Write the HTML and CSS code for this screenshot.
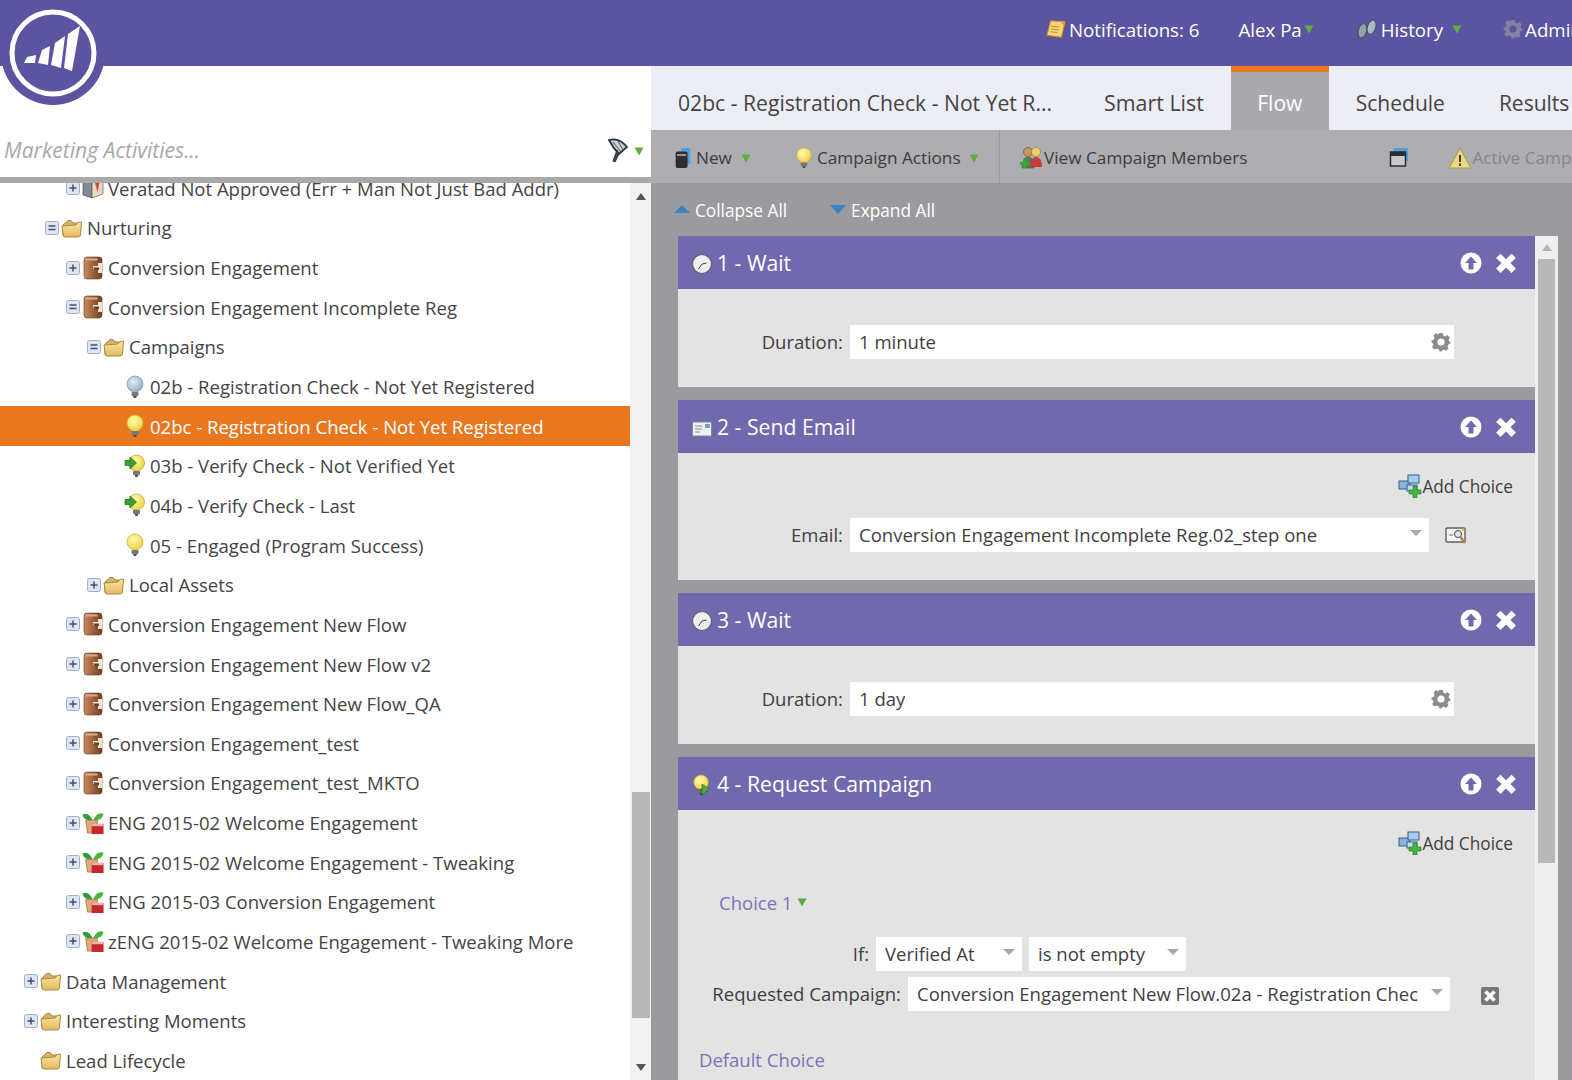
FILE: index.html
```html
<!DOCTYPE html>
<html lang="en">
<head>
<meta charset="utf-8">
<title>Marketing Activities</title>
<link rel="stylesheet" href="styles.css">
</head>
<body>
<svg class="sprite" aria-hidden="true">
  <defs>
    <radialGradient id="gy" cx="40%" cy="35%" r="70%"><stop offset="0" stop-color="#fffbb0"/><stop offset="1" stop-color="#ecd23a"/></radialGradient>
    <radialGradient id="gb" cx="40%" cy="35%" r="70%"><stop offset="0" stop-color="#e4eef8"/><stop offset="1" stop-color="#8fa9c6"/></radialGradient>
    <linearGradient id="gf" x1="0" y1="0" x2="0" y2="1"><stop offset="0" stop-color="#fbe7a6"/><stop offset="1" stop-color="#e3b95c"/></linearGradient>
    <linearGradient id="gp" x1="0" y1="0" x2="1" y2="0"><stop offset="0" stop-color="#c98a5e"/><stop offset="1" stop-color="#6f3d20"/></linearGradient>
    <symbol id="folder" viewBox="0 0 22 20"><path d="M2 7 L2 17 Q2 18.500 4 18.500 L17 18.500 Q19 18.500 19 17 L19 5 L12 5 L10 2.500 L7 2.500 Z" fill="#d9b163" stroke="#a58443"/><path d="M1 8 L15 7 L17 4.500 L20.500 4 L19.500 17 Q19 19 17 19 L4 19 Q2.500 19 2.200 17 Z" fill="url(#gf)" stroke="#a98a48"/></symbol>
    <symbol id="box" viewBox="0 0 22 24"><rect x="2" y="1" width="18" height="22" rx="3" fill="url(#gp)" stroke="#5f3a22" stroke-width=".6"/><rect x="3.500" y="2.500" width="12" height="2" fill="#d9ab88"/><path d="M11 10 L16 10 L16 7 L20 7 L20 17 L16 17 L16 13 L11 13 Z" fill="#f1e3d4"/><path d="M11 11.500 L17 11.500 L17 14 L13 14 Z" fill="#6f3d20"/></symbol>
    <symbol id="bulb" viewBox="0 0 20 24"><circle cx="10" cy="9" r="8" fill="url(#gy)" stroke="#c9ad35" stroke-width=".7"/><path d="M7 15 H13 V17 H7 Z" fill="#e7cf55"/><rect x="6.500" y="17" width="7" height="4" rx="1" fill="#77787c"/><path d="M8 21 H12 L11 23 H9 Z" fill="#4d4e52"/></symbol>
    <symbol id="bulbblue" viewBox="0 0 20 24"><circle cx="10" cy="9" r="8" fill="url(#gb)" stroke="#7e93ab" stroke-width=".7"/><path d="M7 15 H13 V17 H7 Z" fill="#9fb4c9"/><rect x="6.500" y="17" width="7" height="4" rx="1" fill="#77787c"/><path d="M8 21 H12 L11 23 H9 Z" fill="#4d4e52"/></symbol>
    <symbol id="bulbgo" viewBox="0 0 22 24"><circle cx="12.500" cy="9" r="8" fill="url(#gy)" stroke="#b9a030" stroke-width=".7"/><rect x="9" y="17" width="7" height="4" rx="1" fill="#77787c"/><path d="M10.500 21 H14.500 L13.500 23 H11.500 Z" fill="#4d4e52"/><path d="M1 6.500 H6 V3 L12.500 9 L6 15 V11.500 H1 Z" fill="#3aa12e" stroke="#1f6d1b" stroke-width=".7"/></symbol>
    <symbol id="bulbplay" viewBox="0 0 22 24"><circle cx="10" cy="9" r="8" fill="url(#gy)" stroke="#b9a030" stroke-width=".7"/><rect x="6.500" y="16" width="7" height="5" rx="1" fill="#6a6b70"/><path d="M8 21 H12 L11 23 H9 Z" fill="#3d3e42"/><path d="M11 11 L19 16.500 L11 23 Z" fill="#4cae34" stroke="#1f6d1b" stroke-width=".7"/></symbol>
    <symbol id="plant" viewBox="0 0 24 24"><path d="M12 10 Q7 -1 .5 3 Q2 10 12 9 Z" fill="#2f9f35"/><path d="M12 10 Q16 -1 23.500 2 Q22 10 12 9 Z" fill="#45b53c"/><path d="M4 9 H17 L15.500 23 H6 Z" fill="#dcab7c" stroke="#8b6138" stroke-width=".7"/><rect x="10.500" y="13" width="13" height="11" fill="#c7282d"/><rect x="10.500" y="13" width="13" height="2.500" fill="#f1b0ae"/></symbol>
    <symbol id="vera" viewBox="0 0 22 22"><path d="M1 3 L10 6 L10 21 L1 18 Z" fill="#7f8b99" stroke="#4e565f" stroke-width=".7"/><path d="M10 6 L21 2 L21 17 L10 21 Z" fill="#e6d8c6" stroke="#6e5a4a" stroke-width=".7"/><path d="M13 5.500 L18 3.500 L15.500 15 Z" fill="#d0483e"/></symbol>
    <symbol id="plus" viewBox="0 0 14 14"><rect x=".5" y=".5" width="13" height="13" rx="2" fill="#dfe6f2" stroke="#9fb0cb"/><path d="M3.500 7 H10.500 M7 3.500 V10.500" stroke="#3e5170" stroke-width="1.500"/></symbol>
    <symbol id="minus" viewBox="0 0 14 14"><rect x=".5" y=".5" width="13" height="13" rx="2" fill="#dfe6f2" stroke="#9fb0cb"/><path d="M3.500 5 H10.500 M3.500 8.500 H10.500" stroke="#3e5170" stroke-width="1.300"/></symbol>
    <symbol id="caret" viewBox="0 0 10 10"><path d="M.5 1.500 H9.500 L5 9.500 Z" fill="#5fae3a"/></symbol>
    <symbol id="clock" viewBox="0 0 22 22"><circle cx="11" cy="11" r="9.500" fill="#eeeef0" stroke="#62626a" stroke-width="1.200"/><path d="M11 11 L7.500 16 M11 11 L15.500 10" stroke="#44444c" stroke-width="1"/></symbol>
    <symbol id="mail" viewBox="0 0 22 22"><rect x="1.500" y="5" width="19" height="14" fill="#eef0f2" stroke="#868a90"/><path d="M4 9 H11 M4 12 H11 M4 15 H9" stroke="#8a8f96" stroke-width="1.200"/><rect x="14" y="7" width="5" height="4" fill="#7aa0c6"/></symbol>
    <symbol id="upc" viewBox="0 0 24 24"><circle cx="12" cy="12" r="10.500" fill="#fff"/><path d="M12 5.500 L18 12 L14.500 12 L14.500 18.500 L9.500 18.500 L9.500 12 L6 12 Z" fill="#7069ae"/></symbol>
    <symbol id="x" viewBox="0 0 20 20"><path d="M5 1.500 L10 6.500 L15 1.500 L19 5.500 L14 10 L19 15 L15 19 L10 14 L5 19 L1 15 L6 10 L1 5.500 Z" fill="#fff"/></symbol>
    <symbol id="gear" viewBox="0 0 20 20"><path d="M8.300 1 H11.700 L12.200 3.500 L14.300 4.400 L16.500 3 L18.900 5.500 L17.500 7.600 L18.400 9.700 L19.500 10 V11.500 L17.400 12.500 L16.500 14.500 L17.500 16.500 L15 19 L13 17.500 L11 18.500 L10.500 19.500 H8.500 L8 17.500 L5.700 16.500 L3.500 17.500 L1 15 L2.500 13 L1.600 11 L.5 10.500 V8.500 L2.500 8 L3.500 6 L2.500 3.500 L5 1 L7 2.500 Z" fill="currentColor"/><circle cx="10" cy="10" r="3.600" fill="var(--hole)"/></symbol>
    <symbol id="addch" viewBox="0 0 24 24"><rect x="1" y="7" width="11" height="8" fill="#8ab4dc" stroke="#32608c"/><rect x="10" y="1" width="11" height="8" fill="#a6cdf0" stroke="#32608c"/><rect x="9" y="11" width="10" height="6" fill="#c9ddef" stroke="#32608c"/><path d="M15 12 H19 V16 H23 V20 H19 V24 H15 V20 H11 V16 H15 Z" fill="#44b644" stroke="#1f6f1f" stroke-width=".6"/></symbol>
    <symbol id="find" viewBox="0 0 24 20"><rect x="1" y="2" width="19" height="14" rx="1" fill="#f4f4f4" stroke="#5e6066" stroke-width="1.400"/><path d="M4 9 H8" stroke="#6e7076"/><circle cx="13" cy="8" r="3.500" fill="#dbe9f4" stroke="#44474c"/><path d="M15.500 11 L20 17" stroke="#b78332" stroke-width="2.400"/><circle cx="18" cy="4" r="1.500" fill="#e3c63d"/></symbol>
    <symbol id="del" viewBox="0 0 20 20"><rect x="1" y="1" width="18" height="18" rx="2" fill="#77777b"/><path d="M5.500 5.500 L14.500 14.500 M14.500 5.500 L5.500 14.500" stroke="#f4f4f4" stroke-width="3.800"/></symbol>
    <symbol id="note" viewBox="0 0 22 22"><path d="M5 2 L21 3 L17 20 L1 18 Z" fill="#f4d774" stroke="#c9882a" stroke-width="1.200"/><path d="M6 8 L15 9 M5.500 11 L14.500 12 M5 14 L13 15" stroke="#b28a3a"/><path d="M15 2 L21 3 L20 8 Z" fill="#e69b2a"/></symbol>
    <symbol id="steps" viewBox="0 0 22 22"><ellipse cx="6" cy="13" rx="4.500" ry="8" transform="rotate(15 6 13)" fill="#8fa3a8" stroke="#3c4d58"/><ellipse cx="16" cy="9" rx="4.500" ry="8" transform="rotate(18 16 9)" fill="#a7bcc0" stroke="#3c4d58"/></symbol>
    <symbol id="newb" viewBox="0 0 20 24"><rect x="8" y="1" width="10" height="18" rx="2" fill="#4f9fe0"/><rect x="2" y="5" width="13" height="18" rx="2" fill="#2d2d30"/><rect x="3.500" y="8" width="10" height="1.500" fill="#c9c9cc"/></symbol>
    <symbol id="people" viewBox="0 0 24 24"><circle cx="9" cy="6" r="4.500" fill="#c79a5c" stroke="#6f5020" stroke-width=".6"/><path d="M3 22 Q3 11 9 11 Q15 11 15 22 Z" fill="#4f7f5c" stroke="#3f5f40" stroke-width=".6"/><circle cx="17" cy="6" r="4.500" fill="#ecd06a" stroke="#8f7520" stroke-width=".6"/><path d="M11 21 Q11 11 17 11 Q23 11 23 21 Z" fill="#c93a38"/><path d="M4 13 H7 V16 H10 V19 H7 V22 H4 V19 H1 V16 H4 Z" fill="#3aa92e"/></symbol>
    <symbol id="cal" viewBox="0 0 20 20"><rect x="5" y="1" width="14" height="13" fill="#4f9fe0"/><rect x="1.500" y="5" width="15" height="14" fill="#c9c9cc" stroke="#2d2d30" stroke-width="1.500"/><rect x="1.500" y="5" width="15" height="4" fill="#2d2d30"/></symbol>
    <symbol id="warn" viewBox="0 0 24 22"><path d="M12 1.500 L23 21 H1 Z" fill="#e9d98a" stroke="#b7a04a" stroke-width="1.200"/><path d="M12 8 V15 M12 16.500 V19" stroke="#4a3f1c" stroke-width="2"/></symbol>
    <symbol id="funnel" viewBox="0 0 22 26"><path d="M2 2 Q12 -1 20 9 L12 16 Q6 10 2 2 Z" fill="#cbd1d6" stroke="#27323a" stroke-width="1.800"/><path d="M6 4 L14 14 M11 3 L16 12" stroke="#46525c"/><path d="M12 16 L8 24 L6 23 L10 12 Z" fill="#3d4952" stroke="#27323a"/></symbol>
  </defs>
</svg>

<header class="topbar">
  <nav class="topnav">
    <a class="tn tn-notes"><svg class="ic20"><use href="#note"/></svg><span>Notifications: 6</span></a>
    <a class="tn tn-user"><span>Alex Pa</span><svg class="caret"><use href="#caret"/></svg></a>
    <a class="tn tn-hist"><svg class="ic20"><use href="#steps"/></svg><span>History</span><svg class="caret caret-wide"><use href="#caret"/></svg></a>
    <a class="tn tn-admin"><svg class="ic20 topgear"><use href="#gear"/></svg><span>Admin</span></a>
  </nav>
</header>

<div class="logo">
  <svg viewBox="0 0 106 106" width="106" height="106">
    <circle cx="53" cy="53" r="52" fill="#5b54a0"/>
    <circle cx="53" cy="53" r="41" fill="none" stroke="#fff" stroke-width="5"/>
    <path d="M27 57 L36 55 L35 63 L24 63 Z M42 50 L50 46 L48 65 L38 63 Z M55 43 L65 36 L61 68 L51 65 Z M68 34 L80 26 L72 71 L64 68 Z" fill="#fff"/>
  </svg>
</div>

<div class="app">
  <aside class="left">
    <div class="searchbar">
      <div class="search-text">Marketing Activities...</div>
      <svg class="funnel"><use href="#funnel"/></svg>
      <svg class="caret"><use href="#caret"/></svg>
    </div>
    <div class="treewrap">
      <ul class="tree">
        <li class="row l2"><svg class="tog"><use href="#plus"/></svg><svg class="ti"><use href="#vera"/></svg><span>Veratad Not Approved (Err + Man Not Just Bad Addr)</span></li>
        <li class="row l1"><svg class="tog"><use href="#minus"/></svg><svg class="ti"><use href="#folder"/></svg><span>Nurturing</span></li>
        <li class="row l2"><svg class="tog"><use href="#plus"/></svg><svg class="ti"><use href="#box"/></svg><span>Conversion Engagement</span></li>
        <li class="row l2"><svg class="tog"><use href="#minus"/></svg><svg class="ti"><use href="#box"/></svg><span>Conversion Engagement Incomplete Reg</span></li>
        <li class="row l3"><svg class="tog"><use href="#minus"/></svg><svg class="ti"><use href="#folder"/></svg><span>Campaigns</span></li>
        <li class="row l4"><i class="tog"></i><svg class="ti"><use href="#bulbblue"/></svg><span>02b - Registration Check - Not Yet Registered</span></li>
        <li class="row l4 sel"><i class="tog"></i><svg class="ti"><use href="#bulb"/></svg><span>02bc - Registration Check - Not Yet Registered</span></li>
        <li class="row l4"><i class="tog"></i><svg class="ti"><use href="#bulbgo"/></svg><span>03b - Verify Check - Not Verified Yet</span></li>
        <li class="row l4"><i class="tog"></i><svg class="ti"><use href="#bulbgo"/></svg><span>04b - Verify Check - Last</span></li>
        <li class="row l4"><i class="tog"></i><svg class="ti"><use href="#bulb"/></svg><span>05 - Engaged (Program Success)</span></li>
        <li class="row l3"><svg class="tog"><use href="#plus"/></svg><svg class="ti"><use href="#folder"/></svg><span>Local Assets</span></li>
        <li class="row l2"><svg class="tog"><use href="#plus"/></svg><svg class="ti"><use href="#box"/></svg><span>Conversion Engagement New Flow</span></li>
        <li class="row l2"><svg class="tog"><use href="#plus"/></svg><svg class="ti"><use href="#box"/></svg><span>Conversion Engagement New Flow v2</span></li>
        <li class="row l2"><svg class="tog"><use href="#plus"/></svg><svg class="ti"><use href="#box"/></svg><span>Conversion Engagement New Flow_QA</span></li>
        <li class="row l2"><svg class="tog"><use href="#plus"/></svg><svg class="ti"><use href="#box"/></svg><span>Conversion Engagement_test</span></li>
        <li class="row l2"><svg class="tog"><use href="#plus"/></svg><svg class="ti"><use href="#box"/></svg><span>Conversion Engagement_test_MKTO</span></li>
        <li class="row l2"><svg class="tog"><use href="#plus"/></svg><svg class="ti"><use href="#plant"/></svg><span>ENG 2015-02 Welcome Engagement</span></li>
        <li class="row l2"><svg class="tog"><use href="#plus"/></svg><svg class="ti"><use href="#plant"/></svg><span>ENG 2015-02 Welcome Engagement - Tweaking</span></li>
        <li class="row l2"><svg class="tog"><use href="#plus"/></svg><svg class="ti"><use href="#plant"/></svg><span>ENG 2015-03 Conversion Engagement</span></li>
        <li class="row l2"><svg class="tog"><use href="#plus"/></svg><svg class="ti"><use href="#plant"/></svg><span>zENG 2015-02 Welcome Engagement - Tweaking More</span></li>
        <li class="row l0"><svg class="tog"><use href="#plus"/></svg><svg class="ti"><use href="#folder"/></svg><span>Data Management</span></li>
        <li class="row l0"><svg class="tog"><use href="#plus"/></svg><svg class="ti"><use href="#folder"/></svg><span>Interesting Moments</span></li>
        <li class="row l0"><i class="tog"></i><svg class="ti"><use href="#folder"/></svg><span>Lead Lifecycle</span></li>
      </ul>
      <div class="vscroll">
        <div class="arrow arrow-up"></div>
        <div class="thumb"></div>
        <div class="arrow arrow-down"></div>
      </div>
    </div>
  </aside>

  <main class="right">
    <div class="tabs">
      <div class="tab tab-title">02bc - Registration Check - Not Yet R...</div>
      <div class="tab tab-smart">Smart List</div>
      <div class="tab active">Flow</div>
      <div class="tab">Schedule</div>
      <div class="tab">Results</div>
    </div>
    <div class="toolbar">
      <div class="tgroup">
        <a class="tb tb-new"><svg class="ic20"><use href="#newb"/></svg><span>New</span><svg class="caret"><use href="#caret"/></svg></a>
        <a class="tb tb-actions"><svg class="ic20"><use href="#bulb"/></svg><span>Campaign Actions</span><svg class="caret"><use href="#caret"/></svg></a>
      </div>
      <a class="tb tb-members"><svg class="ic24"><use href="#people"/></svg><span>View Campaign Members</span></a>
      <svg class="ic20 tb-cal"><use href="#cal"/></svg>
      <a class="tb tb-active"><svg class="ic24"><use href="#warn"/></svg><span>Active Campaign</span></a>
    </div>
    <div class="expander">
      <a class="ex"><i class="tri tri-up"></i>Collapse All</a>
      <a class="ex"><i class="tri tri-down"></i>Expand All</a>
    </div>
    <div class="flowarea">
      <div class="cards">
        <section class="card">
          <h2 class="card-h"><svg class="ci"><use href="#clock"/></svg><span>1 - Wait</span><svg class="up"><use href="#upc"/></svg><svg class="xx"><use href="#x"/></svg></h2>
          <div class="card-b">
            <div class="frow"><label class="lab">Duration:</label><div class="field f-wide"><span>1 minute</span><svg class="fgear"><use href="#gear"/></svg></div></div>
          </div>
        </section>
        <section class="card">
          <h2 class="card-h"><svg class="ci"><use href="#mail"/></svg><span>2 - Send Email</span><svg class="up"><use href="#upc"/></svg><svg class="xx"><use href="#x"/></svg></h2>
          <div class="card-b card-b-add">
            <a class="addc"><svg class="ic24"><use href="#addch"/></svg>Add Choice</a>
            <div class="frow"><label class="lab">Email:</label><div class="field f-email"><span>Conversion Engagement Incomplete Reg.02_step one</span><i class="dd"></i></div><svg class="findi"><use href="#find"/></svg></div>
          </div>
        </section>
        <section class="card">
          <h2 class="card-h"><svg class="ci"><use href="#clock"/></svg><span>3 - Wait</span><svg class="up"><use href="#upc"/></svg><svg class="xx"><use href="#x"/></svg></h2>
          <div class="card-b">
            <div class="frow"><label class="lab">Duration:</label><div class="field f-wide"><span>1 day</span><svg class="fgear"><use href="#gear"/></svg></div></div>
          </div>
        </section>
        <section class="card">
          <h2 class="card-h"><svg class="ci"><use href="#bulbplay"/></svg><span>4 - Request Campaign</span><svg class="up"><use href="#upc"/></svg><svg class="xx"><use href="#x"/></svg></h2>
          <div class="card-b card-b-add card-last">
            <a class="addc"><svg class="ic24"><use href="#addch"/></svg>Add Choice</a>
            <div class="choice">Choice 1<svg class="caret"><use href="#caret"/></svg></div>
            <div class="frow frow-if"><label class="lab lab-if">If:</label><div class="field f-s1"><span>Verified At</span><i class="dd"></i></div><div class="field f-s2"><span>is not empty</span><i class="dd"></i></div></div>
            <div class="frow frow-req"><label class="lab lab-req">Requested Campaign:</label><div class="field f-req"><span>Conversion Engagement New Flow.02a - Registration Chec</span><i class="dd"></i></div><svg class="deli"><use href="#del"/></svg></div>
            <div class="defch">Default Choice</div>
          </div>
        </section>
      </div>
      <div class="fscroll">
        <div class="fs-arrow"></div>
        <div class="fs-thumb"></div>
      </div>
    </div>
  </main>
</div>
</body>
</html>
```
FILE: styles.css
```css
* { box-sizing: border-box; }
html, body { margin: 0; padding: 0; height: 1080px; overflow: hidden; }
body { position: relative; width: 1572px; background: #fff; font-family: "Open Sans", "Noto Sans", sans-serif; color: #444; }
.sprite { display: block; width: 0; height: 0; }
ul { list-style: none; margin: 0; padding: 0; }

.topbar { height: 66px; background: #5b54a0; overflow: hidden; }
.topnav { display: flex; align-items: center; height: 58px; margin-left: 1046px; width: 600px; color: #fff; font-size: 18.7px; }
.tn { display: flex; align-items: center; flex: none; }
.ic20 { width: 20px; height: 22px; flex: none; }
.ic24 { width: 24px; height: 24px; flex: none; }
.caret { width: 10px; height: 10px; flex: none; }
.tn-notes span { margin-left: 3px; }
.tn-user { margin-left: 39px; }
.tn-user .caret { margin-left: 2px; }
.tn-hist { margin-left: 43px; }
.tn-hist span { margin-left: 4px; }
.caret-wide { margin-left: 9px; }
.tn-admin { margin-left: 41px; }
.tn-admin span { margin-left: 2px; }
.topgear { color: #85819c; --hole: #5b54a0; }

.logo { position: absolute; left: 0; top: 0; width: 106px; height: 106px; overflow: hidden; }
.logo svg { display: block; }

.app { display: flex; height: 1014px; }
.left { width: 651px; flex: none; display: flex; flex-direction: column; }
.searchbar { height: 117px; flex: none; display: flex; align-items: flex-end; padding: 0 7px 10px 4px; border-bottom: 6px solid #a9a9a9; }
.search-text { flex: 1; font-style: italic; color: #a8a8a8; font-size: 21.1px; line-height: 34px; }
.funnel { width: 22px; height: 26px; margin: 0 5px 3px 0; }
.searchbar .caret { margin-bottom: 11px; }
.treewrap { flex: 1; display: flex; overflow: hidden; min-height: 0; }
.tree { flex: 1; margin-top: -14.5px; font-size: 18.55px; color: #444; }
.row { display: flex; align-items: center; height: 39.65px; white-space: nowrap; }
.row > span { margin-left: 4px; }
.l0 { padding-left: 24px; }
.l1 { padding-left: 45px; }
.l2 { padding-left: 66px; }
.l3 { padding-left: 87px; }
.l4 { padding-left: 108px; }
.tog { width: 14px; height: 14px; margin-right: 2px; flex: none; display: block; }
.ti { width: 22px; height: 24px; flex: none; }
.sel { background: #e8771f; color: #fff; }
.vscroll { width: 21px; flex: none; background: #f2f2f2; display: flex; flex-direction: column; align-items: center; }
.arrow { width: 0; height: 0; flex: none; border-left: 5px solid transparent; border-right: 5px solid transparent; }
.arrow-up { border-bottom: 7px solid #555; margin-top: 10px; }
.arrow-down { border-top: 7px solid #555; margin-top: 46px; }
.thumb { width: 18px; height: 226px; flex: none; margin-top: 592px; background: #b8b8b8; }

.right { flex: 1; min-width: 0; display: flex; flex-direction: column; background: #9a9a9f; }
.tabs { height: 64px; flex: none; display: flex; background: #ecedf5; font-size: 21px; color: #444; white-space: nowrap; }
.tab { padding: 0 27px; line-height: 74px; height: 64px; flex: none; }
.tab-title { padding: 0 25px 0 27px; font-size: 21.15px; }
.tab-smart { font-size: 21.4px; }
.tab.active { background: #a9a9ae; color: #fff; border-top: 6px solid #e8771f; line-height: 62px; width: 98px; padding: 0; text-align: center; }
.toolbar { height: 53px; flex: none; background: #adadb2; display: flex; align-items: center; font-size: 17.2px; color: #3c3c3c; white-space: nowrap; overflow: hidden; }
.tgroup { display: flex; align-items: center; width: 349px; height: 100%; flex: none; border-right: 1px solid #9b9ba0; padding-left: 22px; }
.tb { display: flex; align-items: center; flex: none; margin-top: 2px; }
.tb-new span { margin-left: 3px; }
.tb-new .caret { margin-left: 9px; }
.tb-actions { margin-left: 43px; }
.tb-actions span { margin-left: 3px; }
.tb-actions .caret { margin-left: 8px; }
.tb-members { margin-left: 19px; }
.tb-members span { margin-left: 1px; }
.tb-cal { margin-left: 142px; }
.tb-active { margin-left: 39px; color: #85858a; }
.expander { height: 53px; flex: none; display: flex; align-items: center; padding: 2px 0 0 23px; color: #fff; font-size: 17.25px; }
.ex { display: flex; align-items: center; margin-right: 43px; }
.tri { width: 0; height: 0; border-left: 8px solid transparent; border-right: 8px solid transparent; margin-right: 5px; margin-top: -3px; }
.tri-up { border-bottom: 8px solid #3a84c4; }
.tri-down { border-top: 9px solid #3a84c4; }

.flowarea { flex: 1; min-height: 0; display: flex; padding-left: 27px; overflow: hidden; }
.cards { width: 857px; flex: none; }
.card { margin-bottom: 13px; }
.card-h { height: 53px; margin: 0; display: flex; align-items: center; background: #7069ae; color: #fff; font-size: 21.2px; font-weight: 400; padding-left: 13px; }
.ci { width: 22px; height: 22px; margin-top: 3px; flex: none; }
.card-h span { margin-left: 4px; flex: 1; }
.up { width: 24px; height: 24px; flex: none; margin-left: 1px; }
.xx { width: 22px; height: 22px; flex: none; margin: 0 18px 0 12px; }
.card-b { background: #e3e3e3; padding: 36px 0 28px; font-size: 18.55px; color: #3f3f3f; }
.card-b-add { padding-top: 19px; }
.card-last { height: 300px; }
.addc { display: flex; align-items: center; justify-content: flex-end; height: 28px; padding-right: 22px; margin-bottom: 18px; font-size: 17.25px; }
.card-last .addc { margin-bottom: 0; }
.frow { display: flex; align-items: center; height: 34px; white-space: nowrap; }
.lab { width: 165px; text-align: right; margin: -2px 7px 0 0; flex: none; }
.lab-if { width: 191px; }
.lab-req { width: 223px; }
.field { position: relative; height: 34px; background: #fff; display: flex; align-items: center; padding: 0 24px 2px 9px; overflow: hidden; flex: none; }
.f-wide { width: 604px; }
.f-email { width: 579px; }
.f-s1 { width: 146px; margin-right: 7px; }
.f-s2 { width: 157px; }
.f-req { width: 542px; padding-right: 32px; }
.field span { overflow: hidden; white-space: nowrap; }
.fgear { position: absolute; right: 3px; top: 7px; width: 20px; height: 20px; color: #8c8c8c; --hole: #fff; }
.dd { position: absolute; right: 7px; top: 12px; width: 0; height: 0; border-left: 6px solid transparent; border-right: 6px solid transparent; border-top: 6px solid #a8a8a8; }
.findi { width: 24px; height: 20px; margin: 2px 0 0 16px; flex: none; }
.deli { width: 20px; height: 20px; margin: 4px 0 0 30px; flex: none; }
.choice { display: flex; align-items: center; height: 30px; margin: 30px 0 20px 41px; color: #7a74b8; font-size: 18.5px; }
.choice .caret { margin-left: 5px; }
.frow-req { margin-top: 6px; }
.defch { margin: 32px 0 0 21px; line-height: 34px; color: #7a74b8; font-size: 18.5px; }
.fscroll { width: 23px; flex: none; background: #efefef; padding: 0 3px; height: 900px; }
.fs-arrow { width: 0; height: 0; margin: 8px auto 8px; border-left: 5px solid transparent; border-right: 5px solid transparent; border-bottom: 7px solid #b5b5b5; }
.fs-thumb { width: 17px; height: 604px; background: #b8b8b8; }
```
